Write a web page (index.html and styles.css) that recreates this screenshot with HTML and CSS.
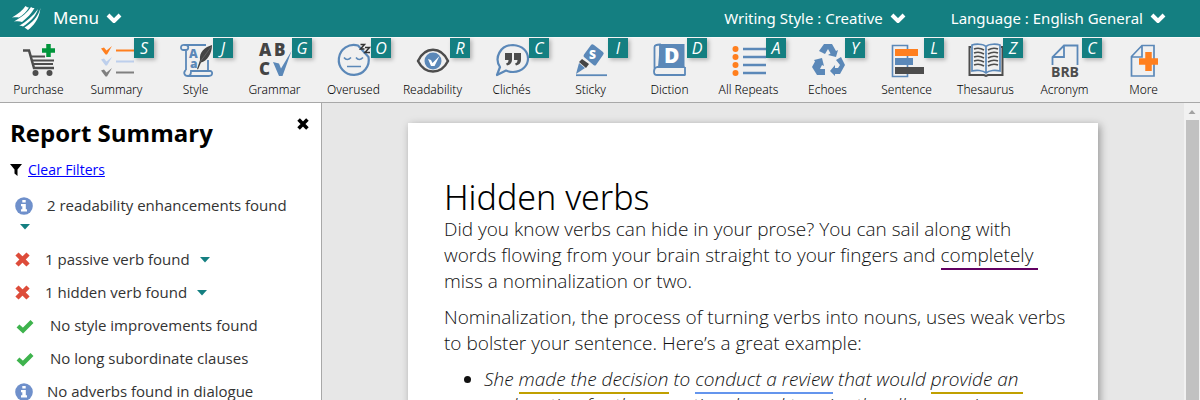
FILE: index.html
```
<!DOCTYPE html>
<html lang="en">
<head>
<meta charset="utf-8">
<meta name="viewport" content="width=device-width, initial-scale=1">
<title>Hidden verbs</title>
<link rel="stylesheet" href="styles.css">
</head>
<body>
<svg class="sprite" aria-hidden="true">
  <symbol id="chevron" viewBox="0 0 16 10"><path d="M2 2l6 6 6-6" fill="none" stroke="currentColor" stroke-width="4"/></symbol>
  <symbol id="info" viewBox="0 0 18 18"><circle cx="9" cy="9" r="8.8" fill="#6f90cb"/><path d="M7.3 3h3.4v2.6H7.3zM6 7h4.8v5.3H12V14.5H6v-2.2h1.3V9.2H6z" fill="#fff"/></symbol>
  <symbol id="cross" viewBox="0 0 16 16"><path d="M3.800 3.800l8.400 8.400M12.200 3.800l-8.400 8.400" fill="none" stroke="currentColor" stroke-width="4.800" stroke-linecap="square"/></symbol>
  <symbol id="tick" viewBox="0 0 20 16"><path d="M3 8l5 4.500L17 3.500" fill="none" stroke="#3eb34d" stroke-width="4.200"/></symbol>
  <symbol id="caret" viewBox="0 0 10 6"><path d="M0 0h10L5 5.500z" fill="#147f81"/></symbol>
</svg>

<header class="topbar">
  <svg class="logo" viewBox="0 0 30 26" aria-hidden="true"><g fill="#fff"><path d="M13.500 1C11 5 6 9 0 12.500c3-.5 5-.5 7 0C11 10 15 6 17 2.500c-1 0-2-.5-3.500-1.500z"/><path d="M19 2C16 7 10 12 2 16.500c3-.5 6-.5 8 .5C15 13 20 8 22.500 3c-1 0-2.500 0-3.500-1z"/><path d="M26 4C21 11 15 16 7 21c2-.5 3 0 4 .5C18 17 24 11 26 4z"/><path d="M28.500 3C26 12 20 18 12.500 22.500L16 25c5-4 11-10 12.500-22z"/></g></svg>
  <button class="menu">Menu <svg class="chevron"><use href="#chevron"/></svg></button>
  <div class="settings">
    <button>Writing Style : Creative <svg class="chevron"><use href="#chevron"/></svg></button>
    <button>Language : English General <svg class="chevron"><use href="#chevron"/></svg></button>
  </div>
</header>

<nav class="toolbar" aria-label="Reports">
  <button class="tool"><svg class="icon" viewBox="0 0 36 36"><path d="M2 8.500h6l5 17.500h20" fill="none" stroke="#4d4d4d" stroke-width="2.500"/><path d="M9 14.500h15M11 18.500h22M12 22h20" stroke="#4d4d4d" stroke-width="2.200"/><circle cx="14.500" cy="31" r="3" fill="#4d4d4d"/><circle cx="28.500" cy="31" r="3" fill="#4d4d4d"/><path d="M27.500 2v13M21 8.500h13" stroke="#00953b" stroke-width="4.500"/></svg><span>Purchase</span></button>
  <button class="tool"><svg class="icon" viewBox="0 0 36 36"><path d="M2 6.500l3-1 2.500 3L13 4 8 12.500H6.500z" fill="#ff7f1e"/><path d="M2 17.500l3-1 2.500 3L13 15 8 23.500H6.500z" fill="#bdcfec"/><path d="M2 28.500l3-1 2.500 3L13 26 8 34.500H6.500z" fill="#808080"/><path d="M17 8.500h18" stroke="#ff7f1e" stroke-width="2"/><path d="M17 19.500h18" stroke="#bdcfec" stroke-width="2"/><path d="M17 30.500h18" stroke="#808080" stroke-width="2"/></svg><span>Summary</span><kbd>S</kbd></button>
  <button class="tool"><svg class="icon" viewBox="0 0 36 36"><g fill="none" stroke="#5b88b8" stroke-width="1.800"><path d="M28 3H7C2 2 2 8 5 8h3v20M8 3c3 0 3 5 0 5M30 18v10"/><path d="M8 28c-3 2-2 6 2 6h21c4 0 4-5 1-5H13c0 3-1 5-3 5"/></g><text x="11" y="15.500" class="glyph blue" font-size="12">A</text><text x="12" y="26" class="glyph blue" font-size="12">a</text><path d="M34 3c-7 2-13 7-12 15l-3 9 1 .5 3-7c6-1 11-9 11-17.500z" fill="#444"/><path d="M33 5L22 20" stroke="#777" stroke-width=".6"/></svg><span>Style</span><kbd>J</kbd></button>
  <button class="tool"><svg class="icon" viewBox="0 0 36 36"><text x="2" y="14" class="glyph" font-size="17">A</text><text x="17" y="14" class="glyph" font-size="17">B</text><text x="2" y="33" class="glyph" font-size="17">C</text><path d="M16 20l6 1.500 2 5L34.500 9 25.500 34H22z" fill="#5b88b8"/></svg><span>Grammar</span><kbd>G</kbd></button>
  <button class="tool"><svg class="icon" viewBox="0 0 36 36"><path d="M22 3.500A15 15 0 1 0 32.500 15z" fill="none" stroke="#5b88b8" stroke-width="2.200" stroke-linejoin="round"/><path d="M8 15.500q3 4 7 0M20 15.500q3 4 7 0M11 24.500h14" fill="none" stroke="#5b88b8" stroke-width="1.600"/><path d="M24.500 2.500h4l-4 4.500h4M29 5.500h4.500l-4.500 5h5" fill="none" stroke="#333" stroke-width="1.500"/></svg><span>Overused</span><kbd>O</kbd></button>
  <button class="tool"><svg class="icon" viewBox="0 0 36 36"><path d="M3 19C10 4 26 4 33 19 26 33 10 33 3 19z" fill="none" stroke="#4d4d4d" stroke-width="2.500" stroke-linejoin="round"/><circle cx="18" cy="19" r="8.500" fill="#5b88b8"/><path d="M13 17l3 1 1.500 3 7-7-5 10h-3.500z" fill="#fff"/></svg><span>Readability</span><kbd>R</kbd></button>
  <button class="tool"><svg class="icon" viewBox="0 0 36 36"><path d="M6 25C0 16 6 3 19 3c20 1 20 26 0 27-3 0-5-.5-7-1.500L3 33z" fill="none" stroke="#5b88b8" stroke-width="2.200" stroke-linejoin="round"/><path d="M11 11h7v7c0 3-2 5-5 5.500l-1-2c2-.5 2.500-2 2.500-3.500H11zM20 11h7v7c0 3-2 5-5 5.500l-1-2c2-.5 2.500-2 2.500-3.500H20z" fill="#4d4d4d"/></svg><span>Clichés</span><kbd>C</kbd></button>
  <button class="tool"><svg class="icon" viewBox="0 0 36 36"><path d="M18 3q1-1.500 3 0l9 7q1.500 1.500 0 3l-7 10q-1 1-2.500 0L11 15q-1-1 0-2.500z" fill="#5b88b8"/><text x="16" y="17" class="glyph white" font-size="12">S</text><path d="M9 17l7 5-3 4-7-6z" fill="#444"/><path d="M6 21l6 5-9 6z" fill="#5b88b8"/><path d="M3 33.200h31" stroke="#5b88b8" stroke-width="1.800"/></svg><span>Sticky</span><kbd>I</kbd></button>
  <button class="tool"><svg class="icon" viewBox="0 0 36 36"><path d="M8 2h24.500v23H6z" fill="#5b88b8"/><path d="M32.500 25H5c-4 1-4 8 0 8h28.500M33 25v8M2.500 28V5c0-2 2-2.500 5.500-2.500V24" fill="none" stroke="#5b88b8" stroke-width="1.800"/><text x="12" y="21" class="glyph white" font-size="21">D</text></svg><span>Diction</span><kbd>D</kbd></button>
  <button class="tool"><svg class="icon" viewBox="0 0 36 36"><g fill="#ff7f1e"><circle cx="4.500" cy="7" r="3"/><circle cx="4.500" cy="15" r="3"/><circle cx="4.500" cy="23" r="3"/><circle cx="4.500" cy="31" r="3"/></g><path d="M12 7h23M12 15h23M12 23h23M12 31h23" stroke="#5b88b8" stroke-width="2.600"/></svg><span>All Repeats</span><kbd>A</kbd></button>
  <button class="tool"><svg class="icon" viewBox="0 0 36 36"><g fill="#5b88b8"><path d="M14 2h8l4 7 2-1-2 7-8-2 2.500-1.500L18 7l-3 5-6-3z"/><path d="M4 18l8-2 2 8-2-1-2 4h5v6H7L2 25l3-5.500z"/><path d="M26 18l5-3 4 8-5 9h-5v2l-5-5 5-6v3h3l2-3z"/></g></svg><span>Echoes</span><kbd>Y</kbd></button>
  <button class="tool"><svg class="icon" viewBox="0 0 36 36"><path d="M3.500 3.500h15v31h-15z" fill="none" stroke="#5b88b8" stroke-width="1.600"/><path d="M6 7h23v7H6z" fill="#ff7f1e"/><path d="M6 16h18v7H6z" fill="#5b88b8"/><path d="M6 25h29v7H6z" fill="#4d4d4d"/></svg><span>Sentence</span><kbd>L</kbd></button>
  <button class="tool"><svg class="icon" viewBox="0 0 36 36"><path d="M3 5H1.500v28H16l2 1 2-1h14.500V5H33" fill="none" stroke="#4d4d4d" stroke-width="2"/><path d="M18 4.500C15 1.500 7 2 4 3v26c4-1 11-1 14 2 3-3 10-3 14-2V3c-3-1-11-1.500-14 1.500zV31" fill="#f0f0f0" stroke="#5b88b8" stroke-width="1.700"/><path d="M6 7q5-2 10 1M6 11q5-2 10 1M6 15q5-2 10 1M6 19q5-2 10 1M6 23q5-2 10 1M20 8q5-3 10-1M20 12q5-3 10-1M20 16q5-3 10-1M20 20q5-3 10-1M20 24q5-3 10-1" fill="none" stroke="#4d4d4d" stroke-width="1.500"/></svg><span>Thesaurus</span><kbd>Z</kbd></button>
  <button class="tool"><svg class="icon" viewBox="0 0 36 36"><path d="M5.500 23V15L17 3.500h13.500V23M17 4v11H6" fill="none" stroke="#5b88b8" stroke-width="1.800"/><text x="18" y="34.500" text-anchor="middle" class="brb" font-size="14">BRB</text></svg><span>Acronym</span><kbd>C</kbd></button>
  <button class="tool"><svg class="icon" viewBox="0 0 36 36"><path d="M5.500 34V14.500L16 3.500h12V34zM16 4v11H6" fill="none" stroke="#5b88b8" stroke-width="1.700"/><path d="M22.500 10v19M13 19.500h19" stroke="#ff7f1e" stroke-width="6.500"/></svg><span>More</span></button>
</nav>

<div class="workspace">
  <aside class="summary">
    <div class="summary-head">
      <h2>Report Summary</h2>
      <button class="close" aria-label="Close"><svg viewBox="0 0 16 16"><use href="#cross"/></svg></button>
    </div>
    <p class="filters"><svg viewBox="0 0 12 12" aria-hidden="true"><path d="M0 0h12L7.500 5.500V12L4.500 9.500v-4z"/></svg><a href="#">Clear Filters</a></p>
    <ul class="findings">
      <li><svg class="info"><use href="#info"/></svg><span>2 readability enhancements found</span><button class="expand below" aria-label="Show readability"><svg><use href="#caret"/></svg></button></li>
      <li><svg class="cross"><use href="#cross"/></svg><span>1 passive verb found</span><button class="expand" aria-label="Show passive verbs"><svg><use href="#caret"/></svg></button></li>
      <li><svg class="cross"><use href="#cross"/></svg><span>1 hidden verb found</span><button class="expand" aria-label="Show hidden verbs"><svg><use href="#caret"/></svg></button></li>
      <li><svg class="tick"><use href="#tick"/></svg><span>No style improvements found</span></li>
      <li><svg class="tick"><use href="#tick"/></svg><span>No long subordinate clauses</span></li>
      <li><svg class="info"><use href="#info"/></svg><span>No adverbs found in dialogue</span></li>
    </ul>
  </aside>

  <main class="editor">
    <article class="page">
      <h1>Hidden verbs</h1>
      <p>Did you know verbs can hide in your prose? You can sail along with<br>words flowing from your brain straight to your fingers and <span class="mark purple">completely </span><br>miss a nominalization or two.</p>
      <p>Nominalization, the process of turning verbs into nouns, uses weak verbs<br>to bolster your sentence. Here’s a great example:</p>
      <ul>
        <li>She <span class="mark gold">made the decision</span> to <span class="mark blue">conduct a review</span> that would <span class="mark gold">provide an </span><br>explanation for the exceptional need to raise the allowance in</li>
      </ul>
    </article>
  </main>
  <div class="scrollbar" aria-hidden="true">
    <svg viewBox="0 0 16 17"><path d="M4.500 11h7L8 7z" fill="#a3a3a3"/></svg>
    <div class="thumb"></div>
  </div>
</div>
</body>
</html>
```
FILE: styles.css
```
* { box-sizing: border-box; }
body {
  margin: 0;
  height: 100vh;
  display: flex;
  flex-direction: column;
  overflow: hidden;
  font-family: "Open Sans", "Noto Sans", sans-serif;
  color: #333;
  background: #fff;
}
button {
  border: 0;
  padding: 0;
  background: none;
  font: inherit;
  color: inherit;
  cursor: pointer;
}
.sprite { position: absolute; width: 0; height: 0; }

.topbar {
  display: flex;
  align-items: center;
  flex: none;
  height: 38px;
  padding: 0 34px 2px 12px;
  background: #147f81;
  border-bottom: 1px solid #fafafa;
  color: #fff;
  font-family: "Noto Sans", sans-serif;
}
.logo { width: 30px; height: 26px; margin-right: 11px; }
.topbar button { display: flex; align-items: center; gap: 7px; font-size: 15px; white-space: nowrap; }
.topbar .menu { font-size: 17px; }
.chevron { width: 16px; height: 10px; }
.settings { display: flex; gap: 45px; margin-left: auto; }

.toolbar {
  display: flex;
  flex: none;
  background: #f0f0f0;
  border-bottom: 1px solid #a8a8a8;
}
.tool {
  position: relative;
  display: flex;
  flex: 0 1 79px;
  flex-direction: column;
  align-items: center;
  gap: 2px;
  padding: 4px 0 3px;
  font-family: "Noto Sans", sans-serif;
  font-size: 12px;
  font-weight: 300;
  line-height: 19px;
  color: #000;
  white-space: nowrap;
}
.tool:first-child { flex-basis: 77px; }
.icon { width: 36px; height: 36px; overflow: visible; }
.tool kbd {
  position: absolute;
  top: 0;
  right: 2px;
  width: 20px;
  height: 20px;
  background: #147f81;
  color: #fff;
  font: italic 16px/20px "Open Sans", sans-serif;
  text-align: center;
  box-shadow: 2px 2px 4px rgba(0, 0, 0, .25);
}
.glyph { font-family: "Open Sans", sans-serif; font-weight: 800; fill: #444; }
.glyph.blue { fill: #5b88b8; }
.glyph.white { fill: #fff; }
.brb { font-family: "Open Sans", sans-serif; font-weight: 700; fill: #4d4d4d; }

.workspace { display: flex; flex: 1; min-height: 0; }
.summary {
  flex: none;
  width: 322px;
  padding: 13px 10px 0;
  border-right: 1px solid #a8a8a8;
  overflow: hidden;
}
.summary-head { display: flex; justify-content: space-between; align-items: flex-start; }
.summary h2 { margin: 0; font-size: 24px; line-height: 34px; color: #000; }
.close { padding: 2px; color: #000; }
.close svg { display: block; width: 12px; height: 12px; }
.filters { display: flex; align-items: center; gap: 6px; margin: 9px 0 15px; font-size: 14px; line-height: 21px; }
.filters svg { width: 12px; height: 12px; }
.filters a { color: #00f; }
.findings { margin: 0; padding: 0 0 0 5px; list-style: none; font-size: 15px; line-height: 21px; }
.findings li { display: flex; flex-wrap: wrap; align-items: center; margin-bottom: 12px; }
.info { width: 18px; height: 18px; margin-right: 14px; }
.cross { width: 15px; height: 15px; margin-right: 15px; color: #dd4c3a; }
.tick { width: 20px; height: 16px; margin-right: 15px; }
.expand { margin-left: 10px; height: 21px; }
.expand svg { display: block; width: 10px; height: 6px; }
.expand.below { flex-basis: 100%; margin-left: 5px; }

.editor {
  flex: 1;
  min-width: 0;
  padding: 20px;
  background: #e7e7e7;
  overflow: hidden;
}
.page {
  max-width: 690px;
  min-height: 400px;
  margin: 0 auto;
  padding: 55px 36px;
  background: #fff;
  box-shadow: 2px 2px 8px rgba(0, 0, 0, .35);
  font-size: 19px;
  font-weight: 300;
  line-height: 26px;
  color: #111;
}
.page h1 { margin: 0; font-family: "Noto Sans", sans-serif; font-size: 34px; font-weight: 300; line-height: 38px; color: #000; }
.page p { margin: 0 0 10px; white-space: nowrap; }
.page ul { margin: 0; padding-left: 40px; font-style: italic; white-space: nowrap; }
.mark { border-bottom: 2px solid; white-space: pre; }
.purple { border-color: #620062; }
.gold { border-color: #c0a000; }
.mark.blue { border-color: #6495ed; }

.scrollbar { display: flex; flex-direction: column; flex: none; width: 16px; background: #f1f1f1; }
.scrollbar svg { width: 16px; height: 17px; flex: none; }
.thumb { flex: 1; margin: 0 1px 0 2px; background: #c1c1c1; }
```
